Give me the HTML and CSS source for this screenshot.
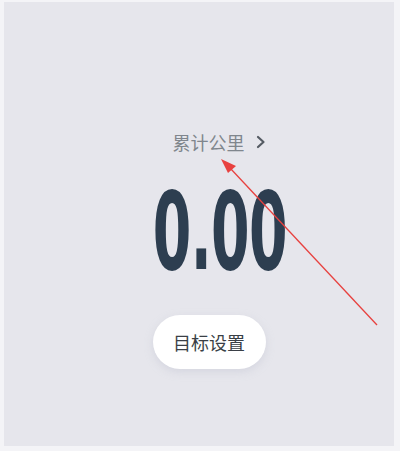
FILE: index.html
```html
<!DOCTYPE html>
<html lang="zh">

<head>
    <meta charset="UTF-8">
    <meta name="viewport" content="width=device-width, initial-scale=1.0">
    <title>累计公里</title>
    <link rel="stylesheet" href="styles.css">
</head>

<body>
    <div class="screen">
        <!-- Judul total jarak -->
        <div class="total-label">
            累计公里
            <svg class="chevron" width="10" height="14" viewBox="0 0 10 14">
                <path d="M2 2 L7.5 7 L2 12" fill="none" stroke="#555b63" stroke-width="2.2" stroke-linecap="round" stroke-linejoin="round" />
            </svg>
        </div>

        <div class="total-value">0.00</div>

        <button class="goal-btn">目标设置</button>
    </div>

    <!-- Panah anotasi -->
    <svg class="annotation" width="400" height="451" viewBox="0 0 400 451">
        <line x1="377" y1="325" x2="230" y2="168" stroke="#e8413f" stroke-width="1.3" />
        <polygon points="221,159 236,166 228,173" fill="#e8413f" />
    </svg>
</body>

</html>
```

FILE: styles.css
```css
body {
    margin: 0;
    padding: 0;
    background-color: #f4f4f7;
    font-family: "Noto Sans CJK SC", "Noto Sans", sans-serif;
}

.screen {
    width: 390px;
    height: 444px;
    margin: 2px 0 0 4px;
    background-color: #e6e6ec;
    display: flex;
    flex-direction: column;
    align-items: center;
    box-sizing: border-box;
    padding-top: 128px;
}

.total-label {
    display: flex;
    align-items: center;
    gap: 11px;
    font-size: 18px;
    color: #80868d;
    line-height: 24px;
    margin-left: 40px;
}

.total-value {
    font-family: "DejaVu Sans Condensed", "DejaVu Sans", sans-serif;
    font-weight: bold;
    font-size: 108px;
    line-height: 106px;
    color: #2d3e50;
    letter-spacing: -1px;
    transform: scaleX(0.57);
    margin-top: 25px;
    margin-left: 42px;
}

.goal-btn {
    margin-top: 30px;
    margin-left: 20px;
    width: 113px;
    height: 54px;
    border: none;
    border-radius: 27px;
    background-color: #ffffff;
    font-family: "Noto Sans CJK SC", sans-serif;
    font-size: 18px;
    color: #3a3f46;
    box-shadow: 0 3px 8px rgba(180, 184, 200, 0.35);
}

.annotation {
    position: absolute;
    left: 0;
    top: 0;
}
```
